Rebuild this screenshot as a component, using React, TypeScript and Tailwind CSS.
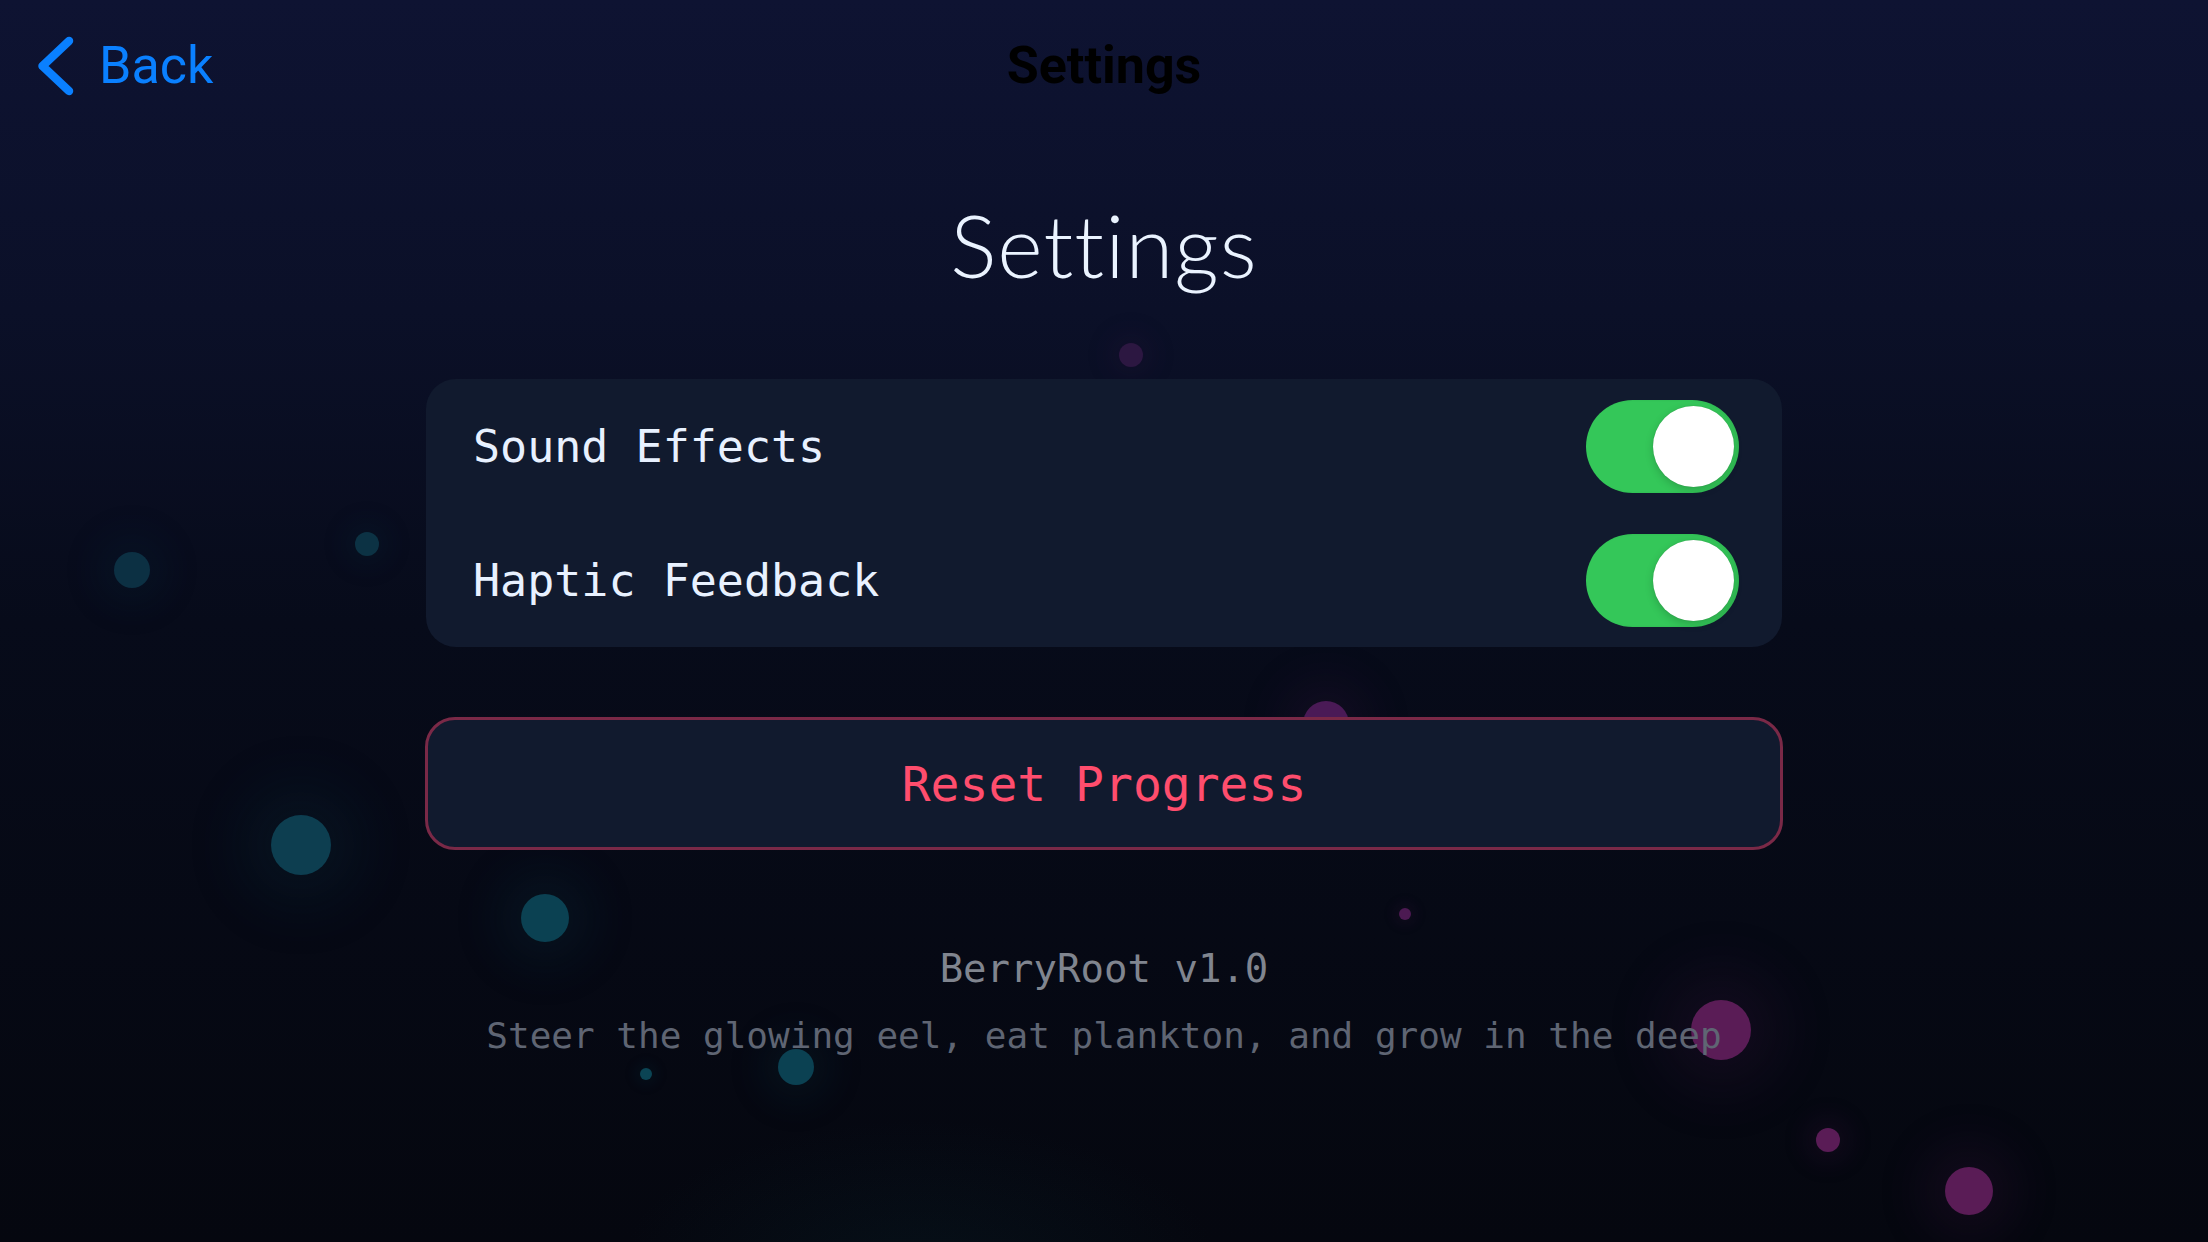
import React from "react";

type Dot = { x: number; y: number; r: number; c: string; g: string };

const dots: Dot[] = [
  { x: 132, y: 570, r: 18, c: "#0c3043", g: "rgba(12,60,80,0.12)" },
  { x: 367, y: 544, r: 12, c: "#0c3244", g: "rgba(12,60,80,0.1)" },
  { x: 301, y: 845, r: 30, c: "#0d3e50", g: "rgba(13,70,90,0.14)" },
  { x: 545, y: 918, r: 24, c: "#0b4152", g: "rgba(13,70,90,0.14)" },
  { x: 796, y: 1067, r: 18, c: "#0b4152", g: "rgba(13,70,90,0.12)" },
  { x: 646, y: 1074, r: 6, c: "#0b4454", g: "rgba(13,70,90,0.1)" },
  { x: 1131, y: 355, r: 12, c: "#2c1741", g: "rgba(70,20,80,0.1)" },
  { x: 1326, y: 724, r: 23, c: "#4a1a56", g: "rgba(90,25,90,0.12)" },
  { x: 1405, y: 914, r: 6, c: "#4c1a52", g: "rgba(90,25,90,0.1)" },
  { x: 1721, y: 1030, r: 30, c: "#5a1c56", g: "rgba(90,25,90,0.14)" },
  { x: 1828, y: 1140, r: 12, c: "#5a1c56", g: "rgba(90,25,90,0.12)" },
  { x: 1969, y: 1191, r: 24, c: "#5a1c56", g: "rgba(90,25,90,0.14)" },
];

function Toggle() {
  return (
    <div className="w-[153px] h-[93px] rounded-full bg-[#34c759] flex items-center justify-end pr-[5px] shadow-[inset_-2px_0_3px_rgba(0,0,0,0.08)]">
      <div className="w-[81px] h-[81px] rounded-full bg-white shadow-[0_3px_8px_rgba(0,0,0,0.18),0_0_1px_rgba(0,0,0,0.2)]" />
    </div>
  );
}

function Row({ label }: { label: string }) {
  return (
    <div className="h-[134px] flex items-center justify-between pl-[47px] pr-[43px]">
      <span className="font-['DejaVu_Sans_Mono',monospace] text-[45px] leading-none text-[#e8f1ff]">
        {label}
      </span>
      <Toggle />
    </div>
  );
}

export default function App() {
  return (
    <div className="relative w-[2208px] h-[1242px] overflow-hidden bg-[linear-gradient(180deg,#0e1332_0%,#0b1028_25%,#070b1a_50%,#05070f_100%)]">
      {/* background particles */}
      <div className="absolute inset-0 pointer-events-none">
        <div className="absolute left-[620px] top-[1120px] w-[600px] h-[300px] rounded-full bg-[radial-gradient(closest-side,rgba(10,50,60,0.2),rgba(10,50,60,0))]" />
        {dots.map((d, i) => (
          <div
            key={i}
            className="absolute rounded-full"
            style={{
              left: d.x - d.r,
              top: d.y - d.r,
              width: d.r * 2,
              height: d.r * 2,
              background: d.c,
              boxShadow: `0 0 ${d.r * 2}px ${d.r}px ${d.g}`,
            }}
          />
        ))}
      </div>

      <div className="relative flex flex-col">
        {/* nav bar */}
        <div className="h-[132px] grid grid-cols-3 items-center">
          <div className="flex items-center pl-[35px]">
            <svg width="40" height="62" viewBox="0 0 40 62" fill="none">
              <path
                d="M34 6 L7.5 31 L34 56"
                stroke="#0a80ff"
                strokeWidth="8.5"
                strokeLinecap="round"
                strokeLinejoin="round"
              />
            </svg>
            <span className="ml-[24px] font-['Roboto',sans-serif] text-[52px] leading-none text-[#0a80ff]">
              Back
            </span>
          </div>
          <div className="flex justify-center">
            <span className="font-['Roboto',sans-serif] font-bold text-[52px] leading-none text-black">
              Settings
            </span>
          </div>
          <div />
        </div>

        {/* content */}
        <div className="flex flex-col items-center">
          <h1 className="mt-[69px] font-['Lato',sans-serif] font-light text-[87px] leading-none text-[#eaf3ff] [font-variant-ligatures:none] tracking-[1px]">
            Settings
          </h1>

          <div className="mt-[91px] w-[1356px] rounded-[30px] bg-[#111a2e] flex flex-col">
            <Row label="Sound Effects" />
            <Row label="Haptic Feedback" />
          </div>

          <button className="mt-[70px] w-[1358px] h-[133px] rounded-[30px] border-[3px] border-[#7a2947] bg-[#111a2e] flex items-center justify-center">
            <span className="font-['DejaVu_Sans_Mono',monospace] text-[48px] leading-none text-[#ff4d6d]">
              Reset Progress
            </span>
          </button>

          <div className="mt-[99px] font-['DejaVu_Sans_Mono',monospace] text-[39px] leading-none text-[#80858f]">
            BerryRoot v1.0
          </div>
          <div className="mt-[30px] font-['DejaVu_Sans_Mono',monospace] text-[36px] leading-none text-[#5f6573]">
            Steer the glowing eel, eat plankton, and grow in the deep
          </div>
        </div>
      </div>
    </div>
  );
}
